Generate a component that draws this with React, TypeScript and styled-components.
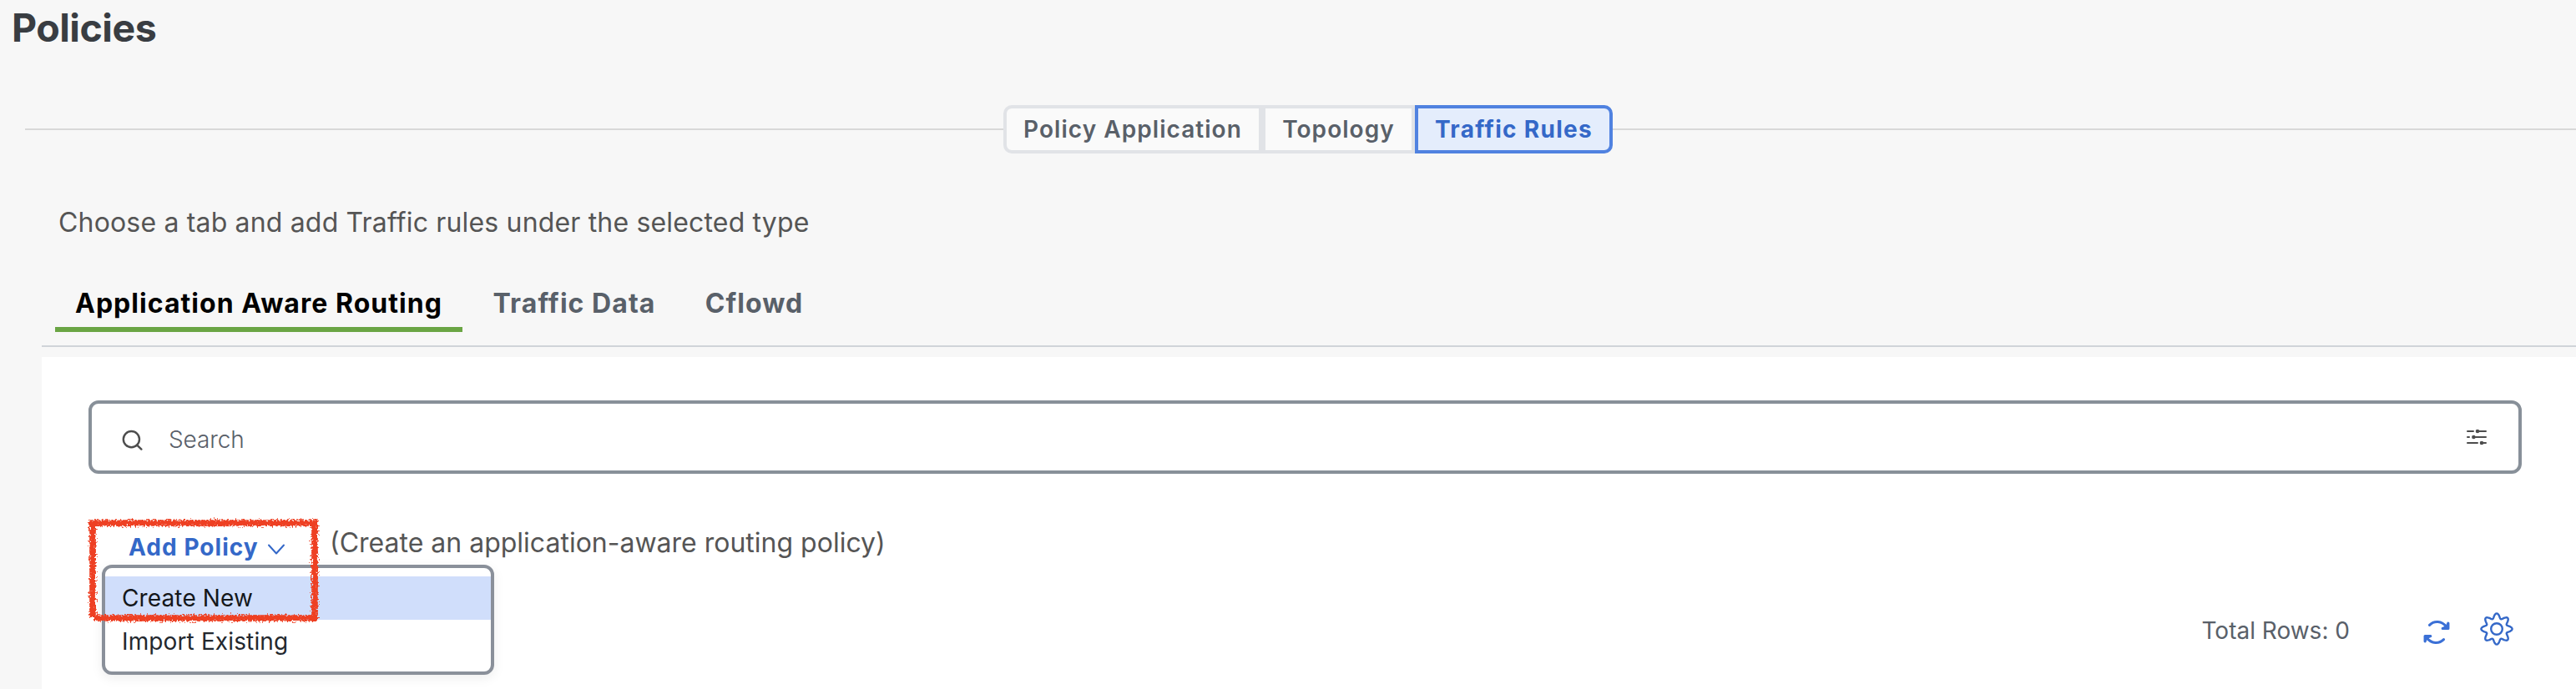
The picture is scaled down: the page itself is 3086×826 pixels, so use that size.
import React from 'react';
import styled, { createGlobalStyle, css } from 'styled-components';

const GlobalStyle = createGlobalStyle`
  * { box-sizing: border-box; }
  body {
    margin: 0;
    background: #f7f7f7;
    font-family: Inter, "Liberation Sans", sans-serif;
  }
  button, input { font-family: inherit; }
`;

const Page = styled.main`
  height: 826px;
  display: flex;
  flex-direction: column;
  overflow: hidden;
  background: #f7f7f7;
`;

const Title = styled.h1`
  margin: 0;
  padding-left: 14px;
  height: 126px;
  font-size: 46.5px;
  line-height: 66px;
  font-weight: 700;
  letter-spacing: -0.5px;
  color: #393d42;
`;

const StepBar = styled.nav`
  display: flex;
  align-items: center;
  height: 58px;
  padding-left: 30px;
`;

const Rule = styled.span<{ $width?: number }>`
  height: 2px;
  background: #d8d8d8;
  ${(p) => (p.$width ? css`width: ${p.$width}px;` : css`flex: 1;`)}
`;

const Segment = styled.button<{ $width: number; $active?: boolean; $edge?: 'start' | 'end' }>`
  width: ${(p) => p.$width}px;
  height: 58px;
  padding: 0;
  border: 4px solid ${(p) => (p.$active ? '#5082e0' : '#e1e3e7')};
  border-radius: ${(p) => (p.$edge === 'start' ? '10px 0 0 10px' : p.$edge === 'end' ? '0 10px 10px 0' : '0')};
  background: ${(p) => (p.$active ? '#e4edfc' : '#fafafa')};
  color: ${(p) => (p.$active ? '#3468c8' : '#596069')};
  font-size: 28px;
  line-height: 50px;
  font-weight: ${(p) => (p.$active ? 700 : 600)};
  letter-spacing: ${(p) => (p.$active ? 1.3 : 1.05)}px;
  white-space: nowrap;
`;

const Hint = styled.p`
  margin: 0;
  padding: 58px 0 0 70px;
  height: 132px;
  font-size: 32px;
  line-height: 50px;
  letter-spacing: 0.17px;
  color: #555;
`;

const Tabs = styled.div`
  display: flex;
  margin-left: 50px;
  height: 100px;
  padding-left: 16px;
  border-bottom: 2px solid #d0d4d9;
`;

const Tab = styled.button<{ $width: number; $active?: boolean }>`
  width: ${(p) => p.$width}px;
  height: 82px;
  padding: 19px 0 0;
  border: 0;
  border-bottom: 6px solid ${(p) => (p.$active ? '#6aa544' : 'transparent')};
  background: none;
  color: ${(p) => (p.$active ? '#000' : '#596069')};
  font-size: 32px;
  line-height: 50px;
  font-weight: 700;
  letter-spacing: 1.05px;
  white-space: nowrap;
`;

const Panel = styled.section`
  flex: 1;
  margin: 12px 0 0 50px;
  padding: 52px 65px 0 56px;
  background: #fff;
`;

const SearchBox = styled.label`
  display: flex;
  align-items: center;
  height: 88px;
  padding: 0 38px 0 36px;
  border: 4px solid #889099;
  border-radius: 12px;
`;

const SearchInput = styled.input`
  flex: 1;
  height: 66px;
  margin-left: 30px;
  padding: 6px 0 0;
  border: 0;
  outline: 0;
  background: none;
  font-size: 28px;
  font-weight: 300;
  letter-spacing: -0.1px;
  &::placeholder { color: #596069; opacity: 1; }
`;

const Actions = styled.div`
  position: relative;
  display: flex;
  height: 148px;
  padding: 54px 0 0 48px;
`;

const AddPolicy = styled.button`
  display: flex;
  align-items: center;
  width: 241px;
  height: 66px;
  padding: 2px 0 0;
  border: 0;
  background: none;
  color: #3468c8;
  font-size: 28px;
  font-weight: 700;
  letter-spacing: 1.05px;
  text-align: left;
  white-space: nowrap;
  svg { margin: 5px 0 0 10px; }
`;

const ActionHint = styled.span`
  font-size: 32px;
  line-height: 58px;
  color: #555;
  white-space: nowrap;
`;

const Menu = styled.ul`
  position: absolute;
  top: 109px;
  left: 16px;
  width: 470px;
  height: 132px;
  margin: 0;
  padding: 10px 0;
  list-style: none;
  border: 4px solid #8a909a;
  border-radius: 12px;
  background: #fff;
  box-shadow: 0 4px 14px rgba(0, 0, 0, 0.07);
`;

const MenuItem = styled.li<{ $active?: boolean }>`
  height: 52px;
  padding-left: 20px;
  font-size: 28px;
  line-height: 52px;
  letter-spacing: 0.13px;
  color: ${(p) => (p.$active ? '#14171a' : '#23282e')};
  background: ${(p) => (p.$active ? '#d0defb' : 'transparent')};
`;

const Marker = styled.svg`
  position: absolute;
  top: 50px;
  left: -4px;
  pointer-events: none;
`;

const Footer = styled.div`
  display: flex;
  justify-content: flex-end;
  align-items: center;
  height: 80px;
  padding-right: 9px;
`;

const Total = styled.span`
  margin-right: 88px;
  font-size: 28px;
  color: #596069;
  white-space: nowrap;
`;

const gearPath = (() => {
  const steps = 160;
  const points: string[] = [];
  for (let i = 0; i < steps; i += 1) {
    const a = (i / steps) * Math.PI * 2;
    const r = 15.7 + 2.9 * Math.cos(a * 8);
    points.push(`${(21 + r * Math.cos(a)).toFixed(2)} ${(21 + r * Math.sin(a)).toFixed(2)}`);
  }
  return `M${points.join('L')}Z`;
})();

const SearchGlyph = styled.svg`
  margin-top: 7px;
`;

const RefreshGlyph = styled.svg`
  margin-top: 4px;
`;

const GearGlyph = styled.svg`
  margin: 0 0 5px 35px;
`;

const SearchIcon = () => (
  <SearchGlyph width="26" height="26" viewBox="0 0 26 26" fill="none" stroke="#4d4d4d" strokeWidth="2.4" strokeLinecap="round">
    <circle cx="11.4" cy="11.6" r="9.6" />
    <path d="M18.2 18.6l5.2 5" />
  </SearchGlyph>
);

const FilterIcon = () => (
  <svg width="24" height="20" viewBox="0 0 24 20" fill="#4d4d4d" stroke="#4d4d4d" strokeWidth="2" strokeLinecap="round">
    <path d="M1 3h7M13 3h10M1 10h2M8 10h15M1 17h12M18 17h5" />
    <circle cx="13" cy="3" r="1.3" />
    <circle cx="8.4" cy="10" r="1.3" />
    <circle cx="18" cy="17" r="1.3" />
  </svg>
);

const RefreshIcon = () => (
  <RefreshGlyph width="32" height="30" viewBox="0 0 32 30" fill="none" stroke="#3b70d6" strokeWidth="3.1" strokeLinecap="round" strokeLinejoin="round">
    <path d="M7.5 6.3C13 .8 22 1 28 8.5" />
    <path d="M29.9 4.2v6.2h-6.7l5-2z" />
    <path d="M24.5 23.7C19 29.2 10 29 4 21.5" />
    <path d="M2.100 25.800v-6.200h6.700l-5 2z" />
  </RefreshGlyph>
);

export default function App() {
  return (
    <>
      <GlobalStyle />
      <Page>
        <Title>Policies</Title>
        <StepBar>
          <Rule $width={1172} />
          <Segment $width={310} $edge="start">Policy Application</Segment>
          <Segment $width={183}>Topology</Segment>
          <Segment $width={237} $edge="end" $active>Traffic Rules</Segment>
          <Rule />
        </StepBar>
        <Hint>Choose a tab and add Traffic rules under the selected type</Hint>
        <Tabs>
          <Tab $width={488} $active>Application Aware Routing</Tab>
          <Tab $width={268}>Traffic Data</Tab>
          <Tab $width={163}>Cflowd</Tab>
        </Tabs>
        <Panel>
          <SearchBox>
            <SearchIcon />
            <SearchInput placeholder="Search" />
            <FilterIcon />
          </SearchBox>
          <Actions>
            <AddPolicy>
              Add Policy
              <svg width="22" height="13" viewBox="0 0 22 13" fill="none" stroke="#3468c8" strokeWidth="2" strokeLinecap="round" strokeLinejoin="round">
                <path d="M2 1.5L11 11.5l9-10" />
              </svg>
            </AddPolicy>
            <ActionHint>(Create an application-aware routing policy)</ActionHint>
            <Menu>
              <MenuItem $active>Create New</MenuItem>
              <MenuItem>Import Existing</MenuItem>
            </Menu>
            <Marker width="288" height="134" viewBox="0 0 288 134" fill="none" stroke="#ee4023" strokeWidth="7.6">
              <defs>
                <filter id="crayon" filterUnits="userSpaceOnUse" x="0" y="0" width="288" height="134" colorInterpolationFilters="sRGB">
                  <feTurbulence type="fractalNoise" baseFrequency="0.5" numOctaves="3" seed="4" result="noise" />
                  <feDisplacementMap in="SourceGraphic" in2="noise" scale="9" xChannelSelector="R" yChannelSelector="G" />
                </filter>
              </defs>
              <g filter="url(#crayon)">
                <path d="M5 9h274M9 6v116M275 6v121M11 123h268" />
              </g>
            </Marker>
          </Actions>
          <Footer>
            <Total>Total Rows: 0</Total>
            <RefreshIcon />
            <GearGlyph width="42" height="42" viewBox="0 0 42 42" fill="none" stroke="#3468c8" strokeWidth="2.4" strokeLinejoin="round">
              <path d={gearPath} />
              <circle cx="21" cy="21" r="6.8" />
            </GearGlyph>
          </Footer>
        </Panel>
      </Page>
    </>
  );
}
